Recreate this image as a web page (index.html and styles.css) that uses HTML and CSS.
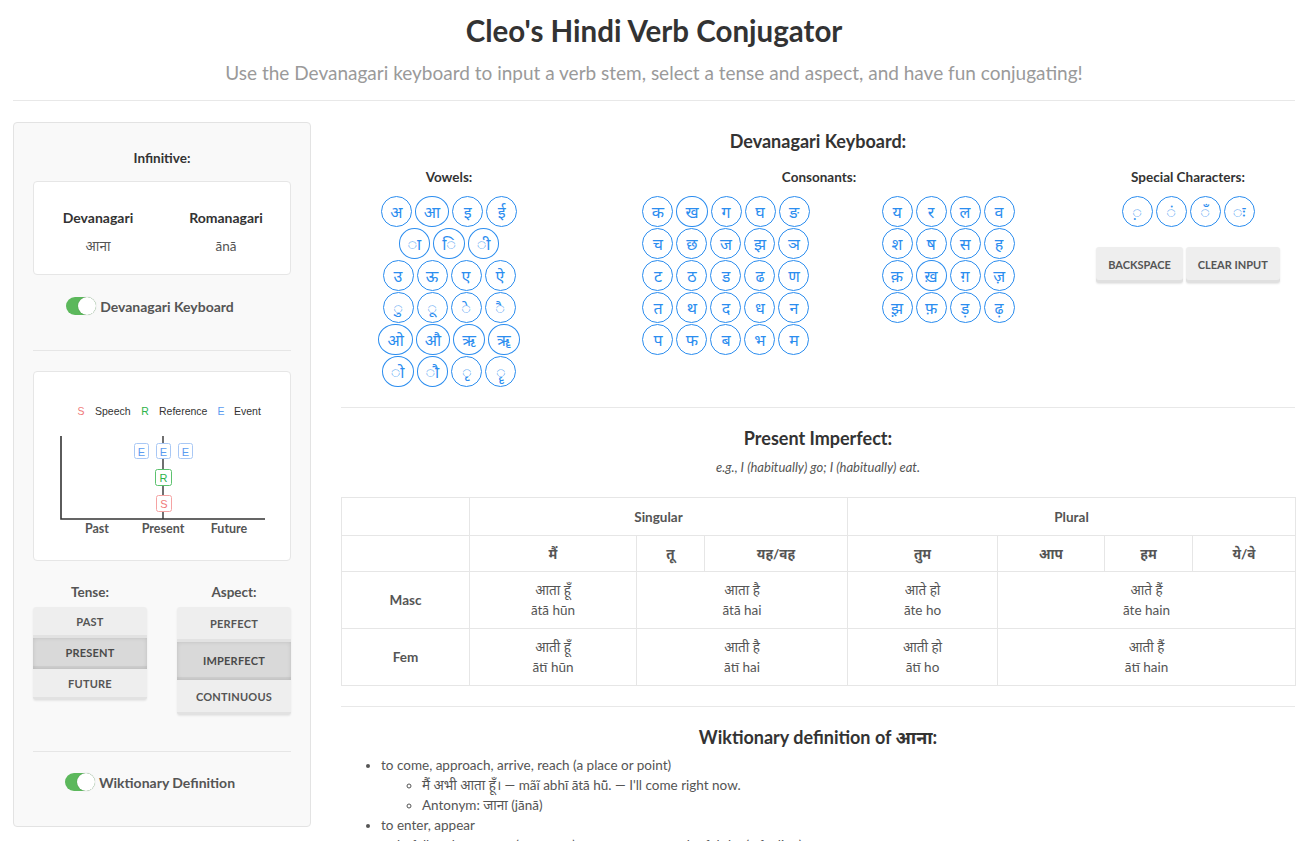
FILE: index.html
```html
<!DOCTYPE html>
<html lang="en">
<head>
<meta charset="utf-8">
<title>Cleo's Hindi Verb Conjugator</title>
<link rel="stylesheet" href="styles.css">
</head>
<body>
<div class="page">
  <header class="hdr">
    <h1 class="title">Cleo's Hindi Verb Conjugator</h1>
    <p class="sub">Use the Devanagari keyboard to input a verb stem, select a tense and aspect, and have fun conjugating!</p>
  </header>

  <div class="layout">
    <aside class="panel">
      <h3 class="p-title">Infinitive:</h3>
      <div class="card inf">
        <div class="inf-col"><div class="inf-h">Devanagari</div><div class="inf-v">आना</div></div>
        <div class="inf-col"><div class="inf-h">Romanagari</div><div class="inf-v">ānā</div></div>
      </div>
      <div class="toggle-row"><span class="switch"><span class="knob"></span></span><span>Devanagari Keyboard</span></div>
      <hr class="p-rule">
      <div class="card chart">
        <svg width="256" height="188" viewBox="1 1 256 188" xmlns="http://www.w3.org/2000/svg">
          <g font-family="Liberation Sans, Arial, sans-serif" font-size="10.5">
            <text x="48" y="44" fill="#f07a7a" text-anchor="middle">S</text>
            <text x="62" y="44" fill="#333">Speech</text>
            <text x="112" y="44" fill="#2db34a" text-anchor="middle">R</text>
            <text x="126" y="44" fill="#333">Reference</text>
            <text x="188" y="44" fill="#5b9cf0" text-anchor="middle">E</text>
            <text x="201" y="44" fill="#333">Event</text>
          </g>
          <path d="M28 65 V148 H232" fill="none" stroke="#333" stroke-width="1.6"/>
          <path d="M130 65 V148" fill="none" stroke="#333" stroke-width="1.4"/>
          <g font-family="Liberation Sans, Arial, sans-serif" font-size="11" text-anchor="middle">
            <rect x="101.5" y="72.5" width="14" height="15" rx="2" fill="#fff" stroke="#a9c8f5"/>
            <text x="108.5" y="84.5" fill="#5b9cf0">E</text>
            <rect x="123.5" y="72.5" width="14" height="15" rx="2" fill="#fff" stroke="#a9c8f5"/>
            <text x="130.5" y="84.5" fill="#5b9cf0">E</text>
            <rect x="145.5" y="72.5" width="14" height="15" rx="2" fill="#fff" stroke="#a9c8f5"/>
            <text x="152.5" y="84.5" fill="#5b9cf0">E</text>
            <rect x="122.5" y="98.5" width="16" height="16" rx="2" fill="#fff" stroke="#5cc26e"/>
            <text x="130.5" y="110.5" fill="#2db34a">R</text>
            <rect x="123.5" y="124.5" width="15" height="16" rx="2" fill="#fff" stroke="#f5a3a3"/>
            <text x="131" y="136.5" fill="#f07a7a">S</text>
          </g>
          <g font-family="Lato, sans-serif" font-size="12.5" font-weight="700" fill="#555" text-anchor="middle">
            <text x="64" y="162">Past</text>
            <text x="130" y="162">Present</text>
            <text x="196" y="162">Future</text>
          </g>
        </svg>
      </div>
      <div class="ta">
        <div class="ta-col">
          <div class="ta-label">Tense:</div>
          <div class="btn-group tense">
            <button class="opt">PAST</button>
            <button class="opt active">PRESENT</button>
            <button class="opt">FUTURE</button>
          </div>
        </div>
        <div class="ta-col">
          <div class="ta-label">Aspect:</div>
          <div class="btn-group aspect">
            <button class="opt">PERFECT</button>
            <button class="opt active">IMPERFECT</button>
            <button class="opt">CONTINUOUS</button>
          </div>
        </div>
      </div>
      <hr class="p-rule p-rule2">
      <div class="toggle-row toggle-row2"><span class="switch"><span class="knob"></span></span><span>Wiktionary Definition</span></div>
    </aside>

    <main class="main">
      <section class="kb">
        <h2 class="sec-title">Devanagari Keyboard:</h2>
        <div class="kb-grid">
          <div class="kb-col vowels">
            <h4 class="kb-h">Vowels:</h4>
            <div class="krow"><span class="key">अ</span><span class="key">आ</span><span class="key">इ</span><span class="key">ई</span></div>
            <div class="krow"><span class="key">◌ा</span><span class="key">◌ि</span><span class="key">◌ी</span></div>
            <div class="krow"><span class="key">उ</span><span class="key">ऊ</span><span class="key">ए</span><span class="key">ऐ</span></div>
            <div class="krow"><span class="key">◌ु</span><span class="key">◌ू</span><span class="key">◌े</span><span class="key">◌ै</span></div>
            <div class="krow"><span class="key">ओ</span><span class="key">औ</span><span class="key">ऋ</span><span class="key">ॠ</span></div>
            <div class="krow"><span class="key">◌ो</span><span class="key">◌ौ</span><span class="key">◌ृ</span><span class="key">◌ॄ</span></div>
          </div>
          <div class="kb-col consonants">
            <h4 class="kb-h kb-h-cons">Consonants:</h4>
            <div class="cons-groups">
              <div class="cgroup">
                <div class="krow"><span class="key">क</span><span class="key">ख</span><span class="key">ग</span><span class="key">घ</span><span class="key">ङ</span></div>
                <div class="krow"><span class="key">च</span><span class="key">छ</span><span class="key">ज</span><span class="key">झ</span><span class="key">ञ</span></div>
                <div class="krow"><span class="key">ट</span><span class="key">ठ</span><span class="key">ड</span><span class="key">ढ</span><span class="key">ण</span></div>
                <div class="krow"><span class="key">त</span><span class="key">थ</span><span class="key">द</span><span class="key">ध</span><span class="key">न</span></div>
                <div class="krow"><span class="key">प</span><span class="key">फ</span><span class="key">ब</span><span class="key">भ</span><span class="key">म</span></div>
              </div>
              <div class="cgroup">
                <div class="krow"><span class="key">य</span><span class="key">र</span><span class="key">ल</span><span class="key">व</span></div>
                <div class="krow"><span class="key">श</span><span class="key">ष</span><span class="key">स</span><span class="key">ह</span></div>
                <div class="krow"><span class="key">क़</span><span class="key">ख़</span><span class="key">ग़</span><span class="key">ज़</span></div>
                <div class="krow"><span class="key">झ़</span><span class="key">फ़</span><span class="key">ड़</span><span class="key">ढ़</span></div>
              </div>
            </div>
          </div>
          <div class="kb-col special">
            <h4 class="kb-h">Special Characters:</h4>
            <div class="krow"><span class="key">◌़</span><span class="key">◌ं</span><span class="key">◌ँ</span><span class="key">◌ः</span></div>
            <div class="actions">
              <button class="act">BACKSPACE</button>
              <button class="act">CLEAR INPUT</button>
            </div>
          </div>
        </div>
      </section>

      <section class="conj-sec">
        <h2 class="sec-title">Present Imperfect:</h2>
        <p class="example">e.g., I (habitually) go; I (habitually) eat.</p>
        <table class="conj">
          <colgroup>
            <col class="c-lab"><col class="c-1"><col class="c-2"><col class="c-3"><col class="c-4"><col class="c-5"><col class="c-6"><col class="c-7">
          </colgroup>
          <thead>
            <tr class="h1"><th></th><th colspan="3">Singular</th><th colspan="4">Plural</th></tr>
            <tr class="h2"><th></th><th>मैं</th><th>तू</th><th>यह/वह</th><th>तुम</th><th>आप</th><th>हम</th><th>ये/वे</th></tr>
          </thead>
          <tbody>
            <tr><th>Masc</th><td>आता हूँ<br>ātā hūn</td><td colspan="2">आता है<br>ātā hai</td><td>आते हो<br>āte ho</td><td colspan="3">आते हैं<br>āte hain</td></tr>
            <tr><th>Fem</th><td>आती हूँ<br>ātī hūn</td><td colspan="2">आती है<br>ātī hai</td><td>आती हो<br>ātī ho</td><td colspan="3">आती हैं<br>ātī hain</td></tr>
          </tbody>
        </table>
      </section>

      <section class="wik">
        <h2 class="sec-title">Wiktionary definition of आना:</h2>
        <ul class="defs">
          <li>to come, approach, arrive, reach (a place or point)
            <ul>
              <li>मैं अभी आता हूँ। — mãĩ abhī ātā hū̃. — I'll come right now.</li>
              <li>Antonym: जाना (jānā)</li>
            </ul>
          </li>
          <li>to enter, appear</li>
          <li>to befall, to happen to (someone), to come upon, to be felt by (a feeling)</li>
        </ul>
      </section>
    </main>
  </div>
</div>
</body>
</html>
```
FILE: styles.css
```css
* { box-sizing: border-box; }

body {
  margin: 0;
  font-family: Lato, "Noto Sans", "Noto Sans Devanagari", sans-serif;
  color: #555;
  background: #fff;
}

.page { padding: 0 13px; }

/* header */
.hdr {
  text-align: center;
  padding-top: 13px;
  height: 101px;
  border-bottom: 1px solid #e8e8e8;
}
.title {
  margin: 0;
  font-size: 29.5px;
  font-weight: 700;
  color: #333;
  line-height: 36px;
}
.sub {
  margin: 12px 0 0;
  font-size: 19px;
  color: #9a9a9a;
  line-height: 24px;
}

.layout {
  display: flex;
  gap: 30px;
  align-items: flex-start;
  padding-top: 21px;
}

/* left panel */
.panel {
  width: 298px;
  flex: none;
  background: #f9f9f9;
  border: 1px solid #e3e3e3;
  border-radius: 4px;
  padding: 25px 19px 35px;
}
.p-title {
  margin: 0;
  text-align: center;
  font-size: 13.5px;
  line-height: 20px;
  font-weight: 700;
  color: #333;
}
.card {
  background: #fff;
  border: 1px solid #e6e6e6;
  border-radius: 4px;
}
.inf {
  margin-top: 13px;
  height: 94px;
  display: flex;
  padding-top: 26px;
}
.inf-col { flex: 1; text-align: center; }
.inf-h { font-size: 14px; font-weight: 700; color: #333; line-height: 20px; }
.inf-v { font-size: 13.5px; color: #555; line-height: 20px; margin-top: 8px; }

.toggle-row {
  display: flex;
  align-items: center;
  justify-content: center;
  gap: 4px;
  padding-right: 24px;
  margin-top: 22px;
  height: 18px;
  font-size: 14px;
  font-weight: 700;
  color: #555;
}
.switch {
  width: 30px;
  height: 18px;
  border-radius: 9px;
  background: #5cb85c;
  position: relative;
  flex: none;
}
.knob {
  position: absolute;
  right: 0;
  top: 0;
  width: 18px;
  height: 18px;
  border-radius: 50%;
  background: #fff;
  box-shadow: 0 0 1px rgba(0,0,0,0.35);
}

.p-rule {
  border: 0;
  border-top: 1px solid #e6e6e6;
  margin: 35px 0 20px;
}
.chart {
  height: 190px;
  overflow: hidden;
}
.chart svg { display: block; }

.ta {
  display: flex;
  gap: 30px;
  margin-top: 21px;
}
.ta-col { flex: 1; }
.ta-label {
  text-align: center;
  font-size: 13.5px;
  font-weight: 700;
  color: #555;
  line-height: 20px;
  margin-bottom: 5px;
}
.btn-group {
  display: flex;
  flex-direction: column;
  border-radius: 3px;
  overflow: hidden;
  box-shadow: 0 1px 2px rgba(0,0,0,0.08);
}
.opt {
  border: 0;
  margin: 0;
  background: #eee;
  font-family: Lato, sans-serif;
  font-weight: 700;
  font-size: 11px;
  color: #555;
  letter-spacing: 0.2px;
  box-shadow: inset 0 -3px 0 #e2e2e2;
  padding: 0;
}
.tense .opt { height: 31px; padding-bottom: 2px; }
.aspect .opt { height: 35px; padding-bottom: 2px; }
.aspect .opt.active { height: 38px; }
.opt.active {
  background: #d9d9d9;
  box-shadow: inset 0 0 4px rgba(0,0,0,0.12), inset 0 -3px 0 #cfcfcf;
  color: #4a4a4a;
}
.p-rule2 { margin: 36px 0 0; }
.toggle-row2 { margin-top: 21px; }

/* main */
.main { flex: 1; min-width: 0; }
.sec-title {
  margin: 0;
  text-align: center;
  font-size: 18px;
  line-height: 22px;
  font-weight: 700;
  color: #333;
}
.kb {
  padding-top: 8px;
  padding-bottom: 19px;
  border-bottom: 1px solid #e8e8e8;
}
.kb-grid {
  display: grid;
  grid-template-columns: 216px 1fr 214px;
  margin-top: 16px;
}
.kb-h {
  margin: 0 0 10px;
  text-align: center;
  font-size: 13.5px;
  line-height: 18px;
  font-weight: 700;
  color: #333;
}
.krow {
  display: flex;
  justify-content: center;
  gap: 3px;
  margin-bottom: 1px;
}
.key {
  display: inline-flex;
  align-items: center;
  justify-content: center;
  height: 31px;
  min-width: 31px;
  padding: 0 8px;
  border: 1px solid #2b8def;
  border-radius: 50%;
  background: #fff;
  color: #2b8def;
  font-size: 16px;
  line-height: 1;
}
.cons-groups {
  display: flex;
  justify-content: center;
  gap: 72px;
  padding-left: 19px;
}
.special .actions {
  display: flex;
  justify-content: center;
  gap: 3px;
  margin-top: 20px;
}
.act {
  border: 0;
  border-radius: 3px;
  background: #eee;
  height: 36px;
  padding: 0 12px 2px;
  font-family: Lato, sans-serif;
  font-weight: 700;
  font-size: 11px;
  color: #555;
  box-shadow: inset 0 -3px 0 #e0e0e0, 0 1px 2px rgba(0,0,0,0.1);
}

.conj-sec {
  padding-top: 19px;
  padding-bottom: 20px;
  border-bottom: 1px solid #e8e8e8;
}
.example {
  margin: 9px 0 0;
  text-align: center;
  font-size: 13px;
  font-style: italic;
  line-height: 18px;
  color: #555;
}
.conj {
  margin-top: 21px;
  width: 100%;
  border-collapse: collapse;
  table-layout: fixed;
  font-size: 13.5px;
  text-align: center;
  color: #555;
}
.c-lab { width: 128px; }
.c-1 { width: 167px; }
.c-2 { width: 68px; }
.c-3 { width: 143px; }
.c-4 { width: 150px; }
.c-5 { width: 107px; }
.c-6 { width: 88px; }
.c-7 { width: 103px; }
.conj th, .conj td {
  border: 1px solid #e6e6e6;
  padding: 0;
}
.conj th { font-weight: 700; color: #555; }
.conj .h1 th { height: 38px; }
.conj .h2 th { height: 36px; }
.conj tbody th, .conj tbody td { height: 57px; line-height: 20px; }
.conj td { color: #555; }

.wik { padding-top: 19px; }
.defs {
  margin: 7px 0 0;
  padding-left: 40px;
  font-size: 13.5px;
  line-height: 20px;
  color: #555;
}
.defs ul {
  margin: 0;
  padding-left: 41px;
  list-style: circle;
}
```
